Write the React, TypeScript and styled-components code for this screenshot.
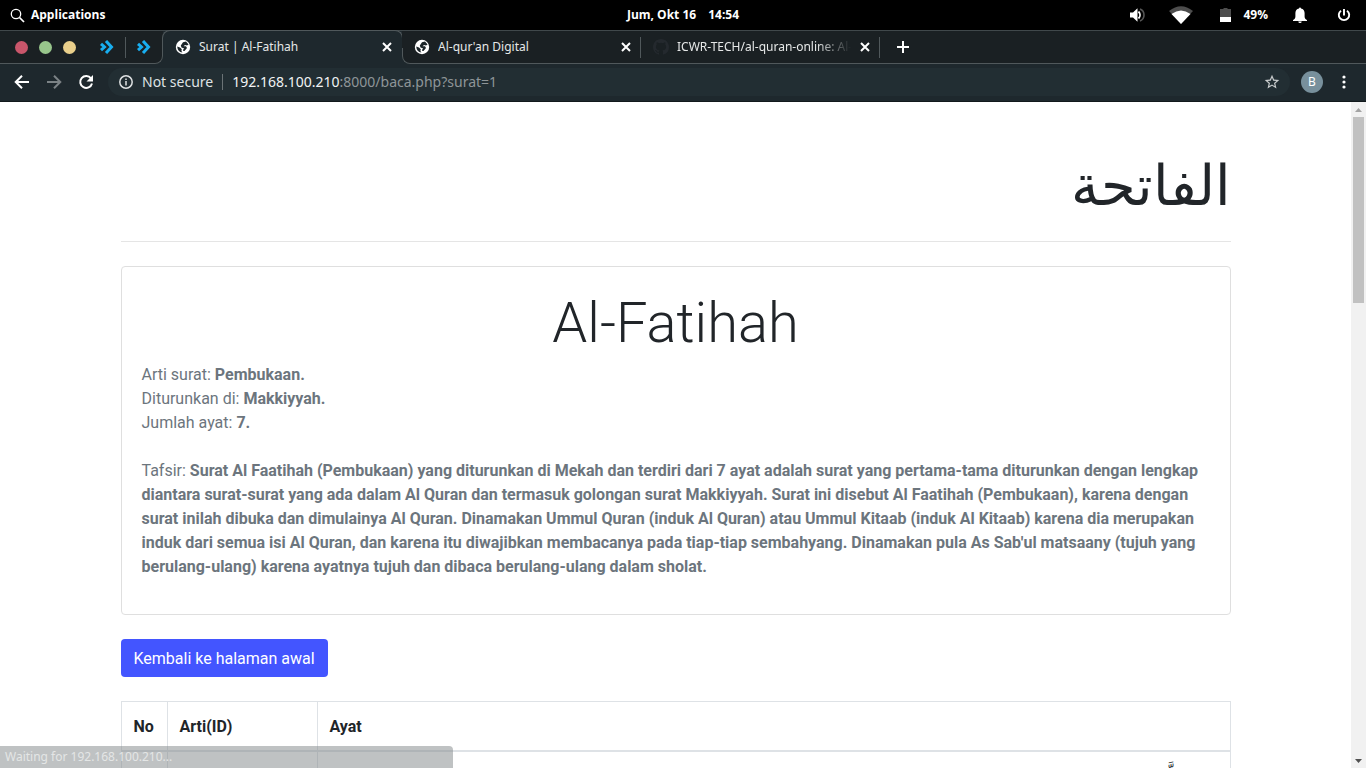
import React from "react";
import styled, { createGlobalStyle, css } from "styled-components";

const GlobalStyle = createGlobalStyle`
  *, *::before, *::after { box-sizing: border-box; }
  body { margin: 0; font-family: Roboto, "DejaVu Sans", sans-serif; background: #fff; color: #212529; }
  button { font: inherit; color: inherit; border: 0; padding: 0; background: none; cursor: pointer; }
`;

const uiFont = `"Noto Sans", "Open Sans", sans-serif`;
const outline = "#50585b";

const Desktop = styled.div`
  display: flex;
  flex-direction: column;
  height: 100vh;
  overflow: hidden;
  position: relative;
`;

/* ---------- system panel ---------- */
const Panel = styled.header`
  display: grid;
  grid-template-columns: 1fr auto 1fr;
  align-items: center;
  flex: none;
  height: 30px;
  padding: 0 10px;
  background: #000;
  color: #fff;
  font: 700 12px/18px "Open Sans", sans-serif;
`;
const PanelButton = styled.button`
  display: flex;
  align-items: center;
  gap: 6px;
`;
const Clock = styled.time`
  display: flex;
  gap: 12px;
`;
const Indicators = styled.div`
  display: flex;
  align-items: center;
  justify-content: flex-end;
  gap: 24px;
`;
const Battery = styled(PanelButton)`
  gap: 12px;
`;

/* ---------- browser chrome ---------- */
const TabStrip = styled.div`
  display: flex;
  flex: none;
  height: 34px;
  background: #1e282d;
  border-top: 1px solid #40484b;
  color: #e6e8e8;
  font: 12px/16px ${uiFont};
`;
const StripSection = styled.div`
  position: relative;
  display: flex;
  align-items: center;
  padding-bottom: 1px;
  background: #1a2023;
  &::after {
    content: "";
    position: absolute;
    inset: 50% 0 0 0;
    border-bottom: 1px solid ${outline};
    pointer-events: none;
  }
`;
const WindowControls = styled(StripSection)`
  gap: 11px;
  padding-left: 15px;
  padding-right: 12px;
  border-bottom-right-radius: 8px;
  &::after {
    border-right: 1px solid ${outline};
    border-bottom-right-radius: 8px;
  }
`;
const TabSection = styled(StripSection)`
  flex: 1;
  min-width: 0;
  border-bottom-left-radius: 8px;
  &::after {
    border-left: 1px solid ${outline};
    border-bottom-left-radius: 8px;
  }
`;
const Dot = styled.button<{ $color: string }>`
  width: 13px;
  height: 13px;
  border-radius: 50%;
  background: ${(p) => p.$color};
`;
const PinnedTab = styled.button`
  display: flex;
  margin-left: 13px;
`;
const Divider = styled.span`
  width: 1px;
  height: 21px;
  background: ${outline};
`;
const TabBase = styled.div`
  display: flex;
  align-items: center;
  gap: 8px;
  width: 238px;
  padding: 0 8px 0 12px;
`;
const ActiveTab = styled(TabBase)`
  position: relative;
  width: 239px;
  padding: 0 9px 1px 12px;
  &::before {
    content: "";
    position: absolute;
    inset: -1px -1px 50% -1px;
    border: 1px solid ${outline};
    border-bottom: 0;
    border-radius: 8px 8px 0 0;
    pointer-events: none;
  }
`;
const TabTitle = styled.span<{ $fade?: boolean }>`
  flex: 1;
  min-width: 0;
  overflow: hidden;
  white-space: nowrap;
  ${(p) => p.$fade && css`mask-image: linear-gradient(to right, #000 80%, transparent);`}
`;
const IconButton = styled.button`
  display: flex;
  flex: none;
`;
const Toolbar = styled.nav`
  display: flex;
  align-items: center;
  flex: none;
  height: 38px;
  padding: 0 14px 1px;
  gap: 16px;
  background: #1e282d;
  border-bottom: 1px solid #12191c;
  color: #fff;
`;
const AddressBar = styled.div`
  display: flex;
  align-items: center;
  flex: 1;
  height: 28px;
  margin-left: -2px;
  padding: 0 10px;
  border-radius: 14px;
  background: #222e33;
  color: #dfe2e3;
  font: 14px/20px ${uiFont};
`;
const Security = styled.button`
  display: flex;
  align-items: center;
  gap: 8px;
  padding-right: 9px;
  border-right: 1px solid #6b7376;
  line-height: 16px;
`;
const Url = styled.span`
  flex: 1;
  padding-left: 9px;
  color: #f1f3f3;
`;
const UrlRest = styled.span`
  color: #8e9598;
`;
const Avatar = styled.button`
  width: 22px;
  height: 22px;
  margin: 0 -3px 0 -5px;
  border-radius: 50%;
  background: #78909c;
  color: #fff;
  font: 12px/22px ${uiFont};
`;

/* ---------- page ---------- */
const Viewport = styled.div`
  display: flex;
  flex: 1;
  min-height: 0;
`;
const Page = styled.main`
  flex: 1;
  min-width: 0;
  overflow: hidden;
`;
const Container = styled.div`
  max-width: 1140px;
  margin: 0 auto;
  padding: 50px 15px 0;
  font-size: 16px;
  line-height: 24px;
`;
const Display = styled.h1`
  margin: 0 0 6px;
  font-size: 56px;
  font-weight: 300;
  line-height: 67px;
  text-align: center;
`;
const ArabicTitle = styled(Display)`
  margin-bottom: 22px;
  font-family: "DejaVu Sans", sans-serif;
  text-align: start;
`;
const Rule = styled.hr`
  margin: 0 0 24px;
  border: 0;
  border-top: 1px solid #e5e5e5;
`;
const Card = styled.section`
  margin-bottom: 24px;
  padding: 23px 20px 19px;
  border: 1px solid #dfdfdf;
  border-radius: 4px;
`;
const CardText = styled.p`
  margin: 0 0 16px;
  color: #6c757d;
`;
const Back = styled.a`
  display: inline-block;
  margin-bottom: 24px;
  padding: 8px 13px 6px;
  border-radius: 4px;
  background: #4355ff;
  color: #fff;
  text-decoration: none;
  vertical-align: top;
`;
const VerseTable = styled.table`
  width: 100%;
  border-collapse: collapse;
  th, td {
    padding: 13px 12px 11px;
    border: 1px solid #dee2e6;
    text-align: left;
    vertical-align: top;
  }
  th { border-bottom-width: 2px; }
`;
const NoCol = styled.col` width: 46px; `;
const MeaningCol = styled.col` width: 150px; `;
const Verse = styled.p`
  margin: 0;
  font-family: "DejaVu Sans", sans-serif;
  text-align: right;
`;

const ScrollTrack = styled.div`
  display: flex;
  flex-direction: column;
  align-items: center;
  flex: none;
  width: 15px;
  background: #f1f1f1;
`;
const ScrollArrow = styled.button`
  display: flex;
  align-items: center;
  justify-content: center;
  width: 15px;
  height: 15px;
`;
const ScrollThumb = styled.div`
  width: 11px;
  height: 28%;
  margin-bottom: auto;
  background: #c1c1c1;
`;
const StatusBubble = styled.div`
  position: absolute;
  left: 0;
  bottom: 0;
  width: 453px;
  height: 22px;
  padding: 0 5px;
  border-top-right-radius: 4px;
  background: rgba(128, 134, 135, 0.5);
  color: #e4e6e6;
  font: 12px/22px ${uiFont};
`;

const Globe = () => (
  <svg width="16" height="16" viewBox="0 0 16 16">
    <circle cx="8" cy="8" r="7.200" fill="#fff" />
    <g fill="#1c2529">
      <path d="M8 3.200L11 2.600 13.600 5.600 12 6.600 10 6 8.600 7.200H11L12 9 9.500 12H8.200V10.600L9.200 9.400 6.500 8.600 5.800 6.600Z" />
      <path d="M2.200 7.600L5 8.400 6.800 10.200 6.400 12 7.400 13.600Q2.600 13 2.200 7.600Z" />
    </g>
  </svg>
);
const Close = () => (
  <svg width="12" height="12" viewBox="0 0 12 12" stroke="#fff" strokeWidth="2">
    <path d="M2 2l8 8M10 2l-8 8" />
  </svg>
);
const Chevrons = () => (
  <svg width="14" height="14" viewBox="0 0 14 14" fill="none" stroke="#18aef0" strokeWidth="3">
    <path d="M6 1l5.500 6L6 13" />
    <path d="M1 3.800L4.500 7 1 10.200" />
  </svg>
);
const GitHub = () => (
  <svg width="16" height="16" viewBox="0 0 16 16" fill="#24292e">
    <path d="M8 0C3.580 0 0 3.580 0 8c0 3.540 2.290 6.530 5.470 7.590.4.070.550-.170.550-.380 0-.190-.010-.820-.010-1.490-2.010.370-2.530-.490-2.690-.940-.090-.230-.480-.940-.820-1.130-.280-.150-.680-.520-.010-.530.630-.010 1.080.580 1.230.820.720 1.210 1.870.870 2.330.660.070-.520.280-.870.510-1.070-1.780-.2-3.640-.890-3.640-3.950 0-.870.310-1.590.820-2.150-.080-.2-.360-1.020.080-2.120 0 0 .670-.210 2.200.820a7.500 7.500 0 014 0c1.530-1.040 2.200-.820 2.200-.820.440 1.100.160 1.920.080 2.120.510.560.820 1.270.820 2.150 0 3.070-1.870 3.750-3.650 3.950.290.250.540.730.540 1.480 0 1.070-.010 1.930-.010 2.200 0 .210.150.460.550.380A8 8 0 0016 8c0-4.420-3.580-8-8-8z" />
  </svg>
);

export default function App() {
  return (
    <Desktop>
      <GlobalStyle />
      <Panel>
        <PanelButton>
          <svg width="15" height="15" viewBox="0 0 15 15" fill="none" stroke="#fff">
            <circle cx="6" cy="6" r="4.700" strokeWidth="1.300" />
            <path d="M9.500 9.500L14 14" strokeWidth="1.700" />
          </svg>
          Applications
        </PanelButton>
        <Clock><span>Jum, Okt 16</span><span>14:54</span></Clock>
        <Indicators>
          <IconButton aria-label="Volume">
            <svg width="16" height="16" viewBox="0 0 16 16" fill="none">
              <path d="M1 5.500h3L8.500 1.200v13.600l-4.500-4.300H1z" fill="#fff" />
              <path d="M9.500 4.500a5 5 0 010 7" stroke="#fff" strokeWidth="1.800" />
              <path d="M11 2a6.500 6.500 0 010 12" stroke="#555" strokeWidth="1.600" />
            </svg>
          </IconButton>
          <IconButton aria-label="Network">
            <svg width="24" height="18" viewBox="0 0 24 18">
              <path d="M0 5Q12-4.500 24 5L12 18z" fill="#4d4d4d" />
              <path d="M2.500 8Q12 1 21.500 8L12 18z" fill="#fff" />
            </svg>
          </IconButton>
          <Battery>
            <svg width="14" height="14" viewBox="-3 0 14 14">
              <path d="M3.500 0h4v1H11v8H0V1h3.500z" fill="#4d4d4d" />
              <path d="M0 9h11v5H0z" fill="#fff" />
            </svg>
            49%
          </Battery>
          <IconButton aria-label="Notifications">
            <svg width="16" height="16" viewBox="0 0 16 16" fill="#fff">
              <path d="M7 1.500a1 1 0 012 0c2.300.500 3.600 2.300 3.600 4.500v3.500c0 2 1 3 2.400 3.500v1H1v-1c1.400-.500 2.400-1.500 2.400-3.500V6C3.400 3.800 4.700 2 7 1.500zM6.300 14.500h3.400a1.700 1.500 0 01-3.400 0z" />
            </svg>
          </IconButton>
          <IconButton aria-label="Power">
            <svg width="24" height="16" viewBox="-4 0 24 16" fill="none" stroke="#fff" strokeWidth="1.900">
              <path d="M8 2v6.500M5 3.700a5.200 5.200 0 106 0" />
            </svg>
          </IconButton>
        </Indicators>
      </Panel>

      <TabStrip>
        <WindowControls>
          <Dot $color="#c9566b" aria-label="Close" />
          <Dot $color="#98c68c" aria-label="Maximize" />
          <Dot $color="#e9cf8b" aria-label="Minimize" />
          <PinnedTab aria-label="Pinned tab"><Chevrons /></PinnedTab>
          <Divider />
          <IconButton aria-label="Pinned tab"><Chevrons /></IconButton>
        </WindowControls>
        <ActiveTab>
          <Globe />
          <TabTitle>Surat | Al-Fatihah</TabTitle>
          <IconButton aria-label="Close tab"><Close /></IconButton>
        </ActiveTab>
        <TabSection>
          <TabBase>
            <Globe />
            <TabTitle>Al-qur'an Digital</TabTitle>
            <IconButton aria-label="Close tab"><Close /></IconButton>
          </TabBase>
          <Divider />
          <TabBase>
            <GitHub />
            <TabTitle $fade>ICWR-TECH/al-quran-online: Al-quran</TabTitle>
            <IconButton aria-label="Close tab"><Close /></IconButton>
          </TabBase>
          <Divider />
          <PinnedTab aria-label="New tab">
            <svg width="20" height="12" viewBox="1 0 20 12" stroke="#fff" strokeWidth="2">
              <path d="M11 0v12M5 6h12" />
            </svg>
          </PinnedTab>
        </TabSection>
      </TabStrip>

      <Toolbar>
        <IconButton aria-label="Back">
          <svg width="16" height="16" viewBox="0 0 16 16" fill="none" stroke="#fff" strokeWidth="2">
            <path d="M15 8H2.500M8 1.700L1.700 8 8 14.300" />
          </svg>
        </IconButton>
        <IconButton aria-label="Forward">
          <svg width="16" height="16" viewBox="0 0 16 16" fill="none" stroke="#7b8285" strokeWidth="2">
            <path d="M1 8h12.500M8 1.700L14.300 8 8 14.300" />
          </svg>
        </IconButton>
        <IconButton aria-label="Reload">
          <svg width="16" height="16" viewBox="0 0 16 16" fill="none">
            <path d="M13 4.300A6 6 0 1014 9.500" stroke="#fff" strokeWidth="2" />
            <path d="M15 1v6.500H8.500z" fill="#fff" />
          </svg>
        </IconButton>
        <AddressBar>
          <Security>
            <svg width="16" height="16" viewBox="0 0 16 16" fill="none" stroke="#dfe2e3" strokeWidth="1.500">
              <circle cx="8" cy="8" r="6.200" />
              <path d="M8 7v4.500M8 4.500v1.500" />
            </svg>
            Not secure
          </Security>
          <Url>192.168.100.210<UrlRest>:8000/baca.php?surat=1</UrlRest></Url>
          <IconButton aria-label="Bookmark">
            <svg width="16" height="16" viewBox="1 1 22 22" fill="#c9cccd">
              <path d="M22 9.240l-7.190-.620L12 2 9.190 8.630 2 9.240l5.460 4.730L5.820 21 12 17.270 18.180 21l-1.630-7.030L22 9.240zM12 15.400l-3.760 2.270 1-4.280-3.320-2.880 4.380-.380L12 6.100l1.710 4.040 4.380.380-3.320 2.880 1 4.280L12 15.400z" />
            </svg>
          </IconButton>
        </AddressBar>
        <Avatar aria-label="Profile">B</Avatar>
        <IconButton aria-label="Menu">
          <svg width="16" height="16" viewBox="0 0 16 16" fill="#fff">
            <circle cx="8" cy="3" r="1.600" /><circle cx="8" cy="8" r="1.600" /><circle cx="8" cy="13" r="1.600" />
          </svg>
        </IconButton>
      </Toolbar>

      <Viewport>
        <Page>
          <Container>
            <ArabicTitle dir="rtl" lang="ar">الفاتحة</ArabicTitle>
            <Rule />
            <Card>
              <Display as="h2">Al-Fatihah</Display>
              <CardText>
                Arti surat: <b>Pembukaan.</b><br />
                Diturunkan di: <b>Makkiyyah.</b><br />
                Jumlah ayat: <b>7.</b><br />
                <br />
                Tafsir: <b>Surat Al Faatihah (Pembukaan) yang diturunkan di Mekah dan terdiri dari 7 ayat adalah surat yang pertama-tama diturunkan dengan lengkap diantara surat-surat yang ada dalam Al Quran dan termasuk golongan surat Makkiyyah. Surat ini disebut Al Faatihah (Pembukaan), karena dengan surat inilah dibuka dan dimulainya Al Quran. Dinamakan Ummul Quran (induk Al Quran) atau Ummul Kitaab (induk Al Kitaab) karena dia merupakan induk dari semua isi Al Quran, dan karena itu diwajibkan membacanya pada tiap-tiap sembahyang. Dinamakan pula As Sab'ul matsaany (tujuh yang berulang-ulang) karena ayatnya tujuh dan dibaca berulang-ulang dalam sholat.</b>
              </CardText>
            </Card>
            <Back href="#">Kembali ke halaman awal</Back>
            <VerseTable>
              <colgroup><NoCol /><MeaningCol /><col /></colgroup>
              <thead><tr><th>No</th><th>Arti(ID)</th><th>Ayat</th></tr></thead>
              <tbody>
                <tr><td /><td /><td><Verse dir="rtl" lang="ar">بِسْمِ اللَّهِ الرَّحْمَنِ الرَّحِيمِ</Verse></td></tr>
              </tbody>
            </VerseTable>
          </Container>
        </Page>
        <ScrollTrack>
          <ScrollArrow aria-label="Scroll up">
            <svg width="7" height="4" viewBox="0 0 7 4" fill="#a3a3a3"><path d="M0 4L3.500 0 7 4z" /></svg>
          </ScrollArrow>
          <ScrollThumb />
          <ScrollArrow aria-label="Scroll down">
            <svg width="7" height="4" viewBox="0 0 7 4" fill="#505050"><path d="M0 0h7L3.500 4z" /></svg>
          </ScrollArrow>
        </ScrollTrack>
      </Viewport>
      <StatusBubble>Waiting for 192.168.100.210...</StatusBubble>
    </Desktop>
  );
}
